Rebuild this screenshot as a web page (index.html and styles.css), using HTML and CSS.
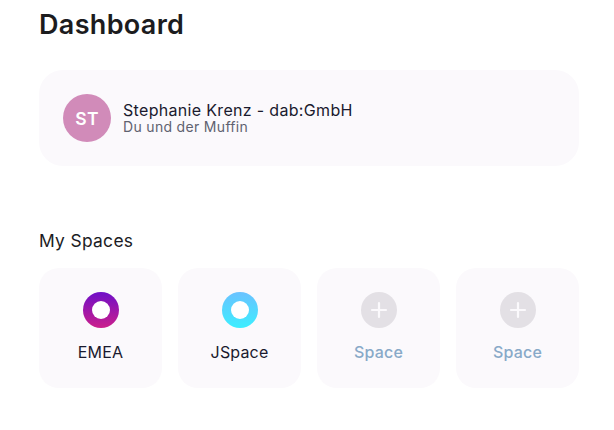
FILE: index.html
```html
<!DOCTYPE html>
<html lang="de">
<head>
<meta charset="utf-8">
<title>Dashboard</title>
<link rel="stylesheet" href="styles.css">
</head>
<body>
<main class="page">
  <h1 class="title">Dashboard</h1>
  <section class="profile">
    <div class="avatar">ST</div>
    <div class="profile-text">
      <div class="profile-name">Stephanie Krenz - dab:GmbH</div>
      <div class="profile-sub">Du und der Muffin</div>
    </div>
  </section>
  <h2 class="section-title">My Spaces</h2>
  <section class="spaces">
    <div class="space">
      <div class="ring ring-purple"></div>
      <div class="space-name">EMEA</div>
    </div>
    <div class="space">
      <div class="ring ring-blue"></div>
      <div class="space-name">JSpace</div>
    </div>
    <div class="space">
      <div class="add">
        <svg width="36" height="36" viewBox="0 0 36 36" fill="none"><path d="M18 11v14M11 18h14" stroke="#fbf9fc" stroke-width="2.2" stroke-linecap="round"/></svg>
      </div>
      <div class="space-name muted">Space</div>
    </div>
    <div class="space">
      <div class="add">
        <svg width="36" height="36" viewBox="0 0 36 36" fill="none"><path d="M18 11v14M11 18h14" stroke="#fbf9fc" stroke-width="2.2" stroke-linecap="round"/></svg>
      </div>
      <div class="space-name muted">Space</div>
    </div>
  </section>
</main>
</body>
</html>
```

FILE: styles.css
```css
html, body {
  margin: 0;
  padding: 0;
  background: #fff;
}
body {
  font-family: Inter, "Liberation Sans", sans-serif;
  color: #1a1a22;
  letter-spacing: 0.02em;
}
.page {
  width: 540px;
  padding: 9px 0 0 39px;
}
.title {
  margin: 0;
  font-size: 27px;
  line-height: 32px;
  font-weight: 600;
  color: #1c1c1e;
}
.profile {
  margin-top: 29px;
  height: 96px;
  box-sizing: border-box;
  padding: 0 24px;
  display: flex;
  align-items: center;
  gap: 12px;
  background: #fbf9fc;
  border-radius: 24px;
}
.avatar {
  width: 48px;
  height: 48px;
  border-radius: 50%;
  background: #d18bb9;
  color: #fff;
  display: flex;
  align-items: center;
  justify-content: center;
  font-size: 17.5px;
  font-weight: 600;
}
.profile-name {
  font-size: 16px;
  line-height: 18px;
  color: #1a1a2e;
}
.profile-sub {
  font-size: 14px;
  line-height: 16px;
  color: #5f6270;
}
.section-title {
  margin: 64px 0 0;
  font-size: 17.4px;
  line-height: 22px;
  font-weight: 400;
  color: #1c1c24;
}
.spaces {
  margin-top: 16px;
  display: grid;
  grid-template-columns: repeat(4, 123px);
  gap: 16px;
}
.space {
  height: 120px;
  box-sizing: border-box;
  padding-top: 24px;
  display: flex;
  flex-direction: column;
  align-items: center;
  background: #fbf9fc;
  border-radius: 20px;
}
.ring {
  width: 36px;
  height: 36px;
  border-radius: 50%;
  display: flex;
  align-items: center;
  justify-content: center;
}
.ring::after {
  content: "";
  width: 18px;
  height: 18px;
  border-radius: 50%;
  background: #fff;
}
.ring-purple {
  background: linear-gradient(180deg, #6f0fc8, #cb1f8c);
}
.ring-blue {
  background: linear-gradient(180deg, #6ac2ff, #3ceeff);
}
.add {
  width: 36px;
  height: 36px;
  border-radius: 50%;
  background: #e3e0e5;
}
.add svg {
  display: block;
}
.space-name {
  margin-top: 14px;
  font-size: 16px;
  line-height: 20px;
  letter-spacing: 0.01em;
  color: #1a1a2e;
}
.muted {
  font-weight: 500;
  color: #88a9c8;
}
```
